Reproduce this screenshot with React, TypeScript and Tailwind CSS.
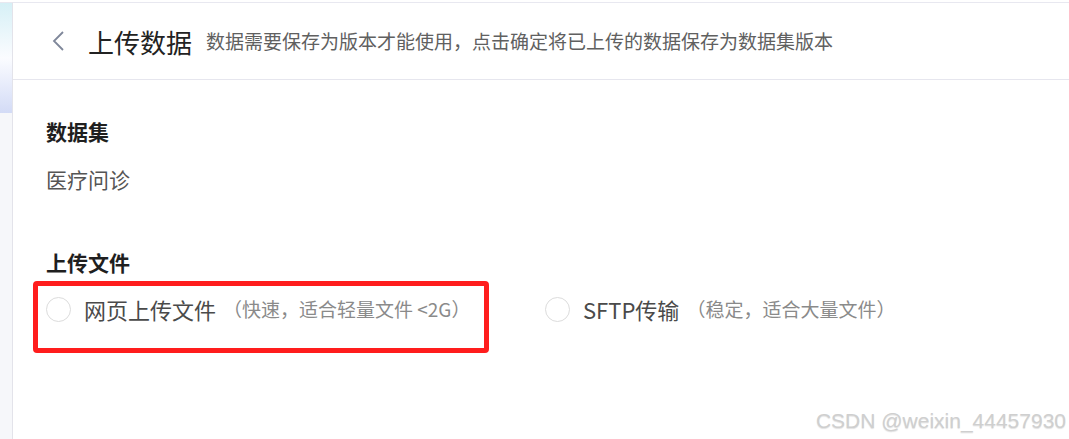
import React from 'react';

const cjk = { fontFamily: '"Noto Sans CJK SC", "Noto Sans", sans-serif' };

function Radio({ label, hint }: { label: string; hint: string }) {
  return (
    <label className="flex items-center h-[28px]">
      <span className="w-[25px] h-[25px] rounded-full border border-[#dcdcdc] bg-white" />
      <span className="ml-[13px] text-[22px] text-[#4a4a4a]">{label}</span>
      <span className="ml-[7px] text-[19px] text-[#8a8a8a]">{hint}</span>
    </label>
  );
}

export default function App() {
  return (
    <div className="relative w-[1069px] h-[439px] bg-white overflow-hidden" style={cjk}>
      <div className="flex h-full pt-[2px]">
        <aside className="w-[13px] shrink-0 border-r border-[#e3e3ea] bg-[#f6f7fa] border-t border-t-[#e8e8f0]">
          <div className="h-[110px] bg-gradient-to-b from-[#d6f0f6] via-[#fbfcff] to-[#d3dbf6]" />
        </aside>
        <main className="flex-1 border-t border-[#e8e8f0]">
          <header className="h-[77px] flex items-center border-b border-[#e6e6ee]">
            <svg className="ml-[38px]" width="14" height="22" viewBox="0 0 14 22" fill="none">
              <path d="M12 2 L3 11 L12 20" stroke="#7f879a" strokeWidth="1.8" />
            </svg>
            <h1 className="ml-[23px] text-[26px] text-[#222]">上传数据</h1>
            <p className="ml-[14px] text-[19px] text-[#606060]">数据需要保存为版本才能使用，点击确定将已上传的数据保存为数据集版本</p>
          </header>
          <section className="pl-[33px]">
            <h2 className="mt-[37px] h-[28px] leading-[28px] text-[21px] font-bold text-[#1f1f1f]">数据集</h2>
            <p className="mt-[20px] h-[28px] leading-[28px] text-[21px] text-[#555]">医疗问诊</p>
            <h2 className="mt-[55px] h-[28px] leading-[28px] text-[21px] font-bold text-[#1f1f1f]">上传文件</h2>
            <div className="mt-[19px] flex">
              <div className="w-[499px]">
                <Radio label="网页上传文件" hint="（快速，适合轻量文件 <2G）" />
              </div>
              <Radio label="SFTP传输" hint="（稳定，适合大量文件）" />
            </div>
          </section>
        </main>
      </div>
      <div className="absolute left-[33px] top-[281px] w-[456px] h-[72px] border-[5px] border-[#ff1d1d] rounded-[4px]" />
      <div
        className="absolute right-[3px] bottom-[3px] text-[21px] text-[#cfcfcf] [text-shadow:0_1px_1px_rgba(0,0,0,0.12)]"
        style={{ fontFamily: '"Liberation Sans", Arial, sans-serif' }}
      >
        CSDN @weixin_44457930
      </div>
    </div>
  );
}
